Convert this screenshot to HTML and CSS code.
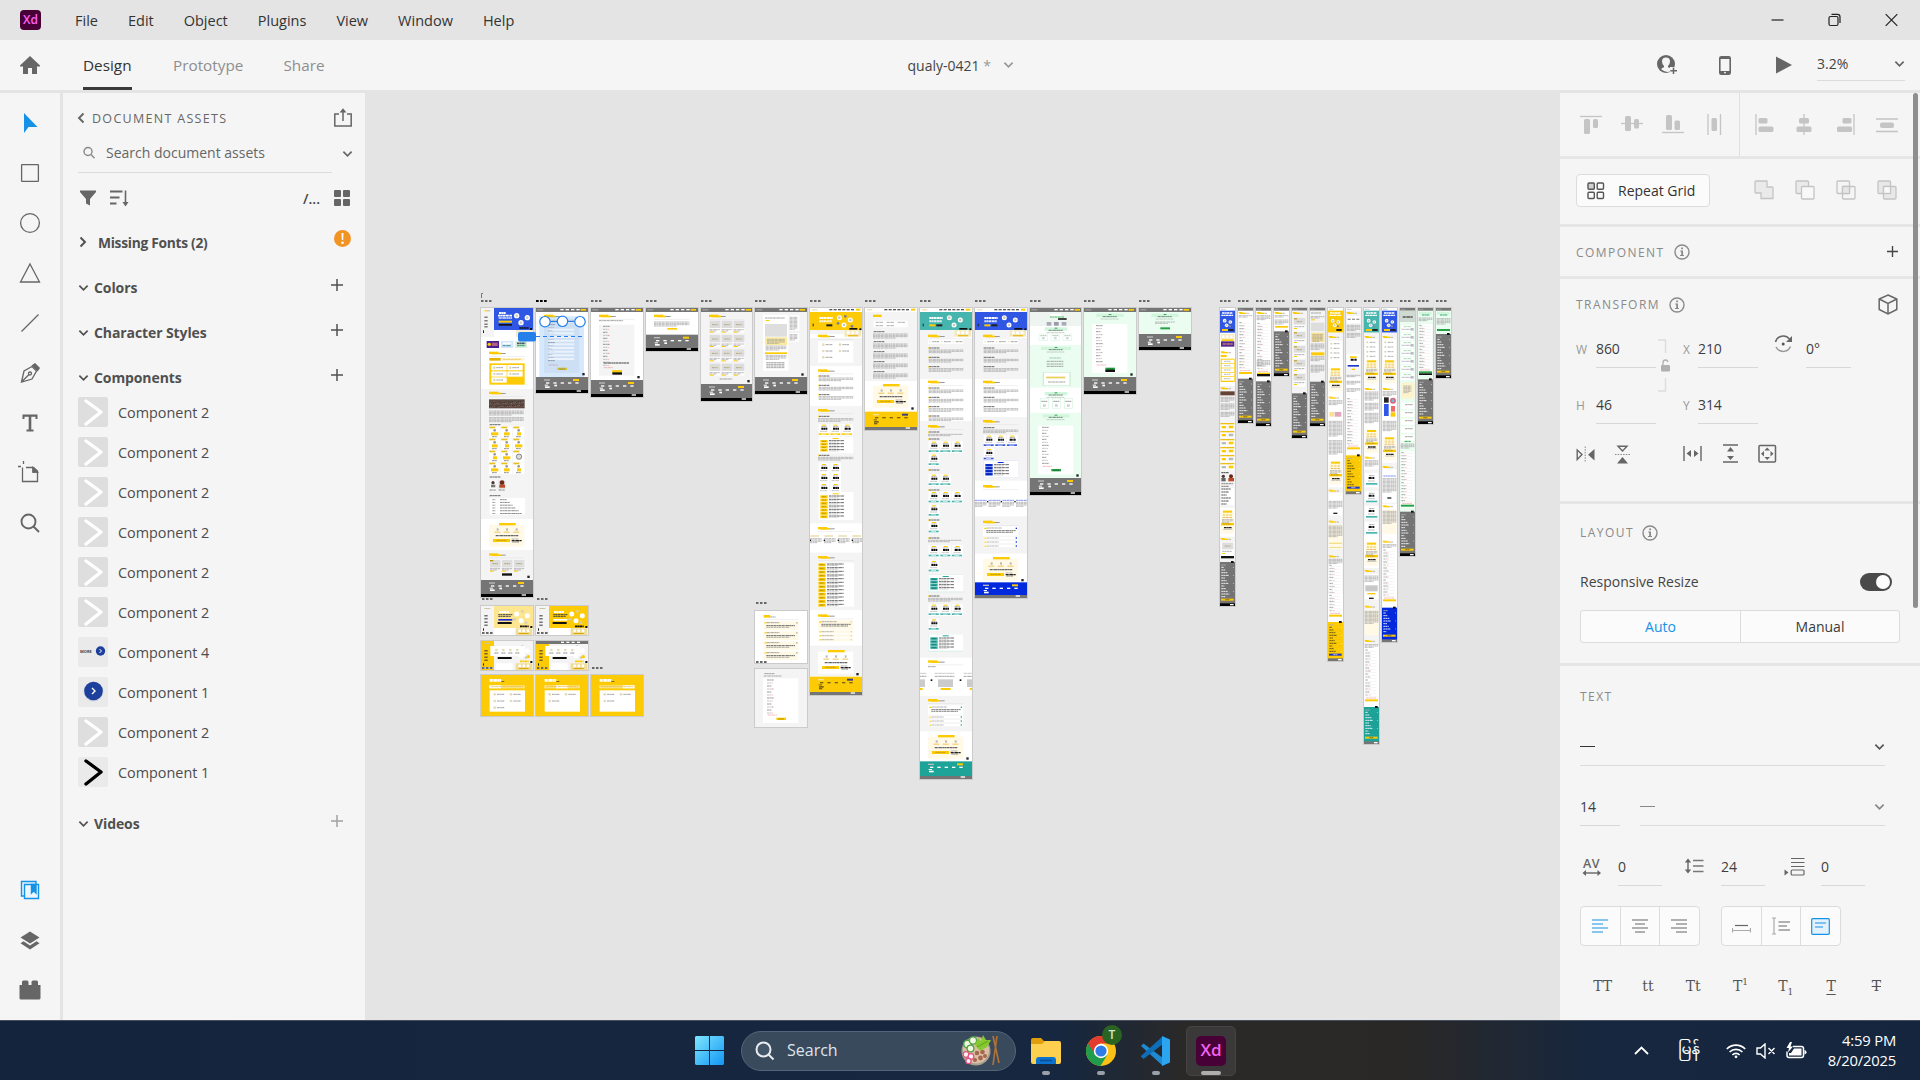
FILE: index.html
```html
<!DOCTYPE html>
<html lang="en">
<head>
<meta charset="utf-8">
<title>qualy-0421 - Adobe XD</title>
<link rel="stylesheet" href="styles.css">
</head>
<body>
<svg width="0" height="0" class="defs">
  <symbol id="down" viewBox="0 0 12 8"><path d="M1.500 1.500 6 6 10.500 1.500" fill="none" stroke="currentColor" stroke-width="1.900"/></symbol>
  <symbol id="right" viewBox="0 0 8 12"><path d="M1.500 1.500 6 6 1.500 10.500" fill="none" stroke="currentColor" stroke-width="1.900"/></symbol>
  <symbol id="plus" viewBox="0 0 12 12"><path d="M6 0V12M0 6H12" stroke="currentColor" stroke-width="1.500"/></symbol>
  <symbol id="info" viewBox="0 0 16 16"><circle cx="8" cy="8" r="7" fill="none" stroke="currentColor" stroke-width="1.400"/><path d="M7.200 3.500H9V5.200H7.200ZM6.200 6.500H9V11H10V12H6V11H7.200V7.500H6.200Z" fill="currentColor"/></symbol>
  <symbol id="tile" viewBox="0 0 30 30"><path d="M8 4 23 15 8 27" fill="none" stroke="currentColor" stroke-width="3.400" stroke-linecap="round" stroke-linejoin="round"/></symbol>
</svg>
<div class="app">
  <header class="titlebar">
    <div class="xd-logo">Xd</div>
    <nav class="menu"><span>File</span><span>Edit</span><span>Object</span><span>Plugins</span><span>View</span><span>Window</span><span>Help</span></nav>
    <div class="win-buttons">
      <svg width="13" height="14"><path d="M0.500 7H12.500" stroke="#222" stroke-width="1.200"/></svg>
      <svg width="13" height="14" fill="none" stroke="#222" stroke-width="1.200"><rect x="1" y="3.500" width="9" height="9" rx="1.500"/><path d="M3.500 1.400H9.500Q12 1.400 12 4V10"/></svg>
      <svg width="13" height="14"><path d="M0.700 1.200 12.300 12.800M12.300 1.200 0.700 12.800" stroke="#222" stroke-width="1.200"/></svg>
    </div>
  </header>
  <div class="modebar">
    <svg class="home" width="20" height="19" viewBox="0 0 20 19"><path d="M10 0 20 9.500V10.500H17V18H12V12H8V18H3V10.500H0V9.500Z" fill="#666"/></svg>
    <nav class="modes"><span class="on">Design</span><span>Prototype</span><span>Share</span></nav>
    <div class="doc-name">qualy-0421 <i>*</i><svg width="11" height="8"><use href="#down"/></svg></div>
    <div class="mode-actions">
      <svg width="21" height="20" viewBox="0 0 21 20"><circle cx="9" cy="9" r="9" fill="#666"/><path d="M4.300 14.500Q4.500 12.800 7 12.200V11Q5 9 5 6.500 5 2.500 9 2.500T13 6.500Q13 9 11 11V12.200L13 13V16.500Q9 18 4.300 14.500Z" fill="#f5f5f5"/><path d="M13 12H21V20H13Z" fill="#f5f5f5"/><path d="M16.500 12.500V19M13.300 15.700H20" stroke="#666" stroke-width="1.500"/></svg>
      <svg width="12" height="19" viewBox="0 0 12 19"><rect x="0.800" y="0.800" width="10.400" height="17.400" rx="1.500" fill="none" stroke="#666" stroke-width="1.600"/><path d="M1 1H11V3H1ZM1 15H11V18H1Z" fill="#666"/><circle cx="6" cy="16.600" r="0.900" fill="#fff"/></svg>
      <svg width="16" height="18"><path d="M0 0.500 16 9 0 17.500Z" fill="#666"/></svg>
      <div class="zoom-level">3.2%<svg width="11" height="8"><use href="#down"/></svg></div>
    </div>
  </div>

  <main class="workspace">
    <aside class="tools">
      <svg width="24" height="24"><path d="M6 2V22L10.500 16H19.500Z" fill="#1592e6"/></svg>
      <svg width="24" height="24" class="ln"><rect x="3.600" y="3.600" width="16.800" height="16.800" rx="0.500"/></svg>
      <svg width="24" height="24" class="ln"><circle cx="12" cy="12" r="9.400"/></svg>
      <svg width="24" height="24" class="ln"><path d="M12 3 21.500 21H2.500Z"/></svg>
      <svg width="24" height="24" class="ln"><path d="M3.500 20.500 20.500 3.500"/></svg>
      <svg width="24" height="24" class="ln"><path d="M3.500 21 6 10 14 5.500 18.500 10 14 18ZM3.500 21 11 13.500"/><circle cx="12" cy="12.500" r="1.500"/><path d="M14.500 4.500 17 2.800 21.200 7 19.500 9.500Z" fill="#666"/></svg>
      <svg width="24" height="24"><path d="M4.500 3.500H19.500V8H17.500V5.800H13.300V18.500H15.500V20.500H8.500V18.500H10.700V5.800H6.500V8H4.500Z" fill="#666"/></svg>
      <svg width="24" height="24" class="ln"><path d="M4.500 6.500V20.500H19.500V10L15.500 6.500H8M15 6.500V11H19.500M5.500 0V3M0 5.500H3"/><path d="M15 6.500V11H19.500Z" fill="#666"/></svg>
      <svg width="24" height="24" class="ln zm"><circle cx="10.500" cy="10.500" r="7"/><path d="M15.500 15.500 21 21"/></svg>
      <div class="spring"></div>
      <svg width="24" height="24" fill="#eaf5fd" stroke="#1592e6" stroke-width="1.400"><path d="M3.500 3.500H18V18H3.500Z"/><path d="M6.500 6.500H20.500V20.500H6.500Z"/><path d="M13.500 6.500H18V15L15.700 12.700 13.500 15Z" fill="#1592e6"/></svg>
      <svg width="24" height="24" fill="#666"><path d="M12 3.500 21.500 9.500 12 15.500 2.500 9.500Z"/><path d="M5.500 13.300 12 17.400 18.500 13.300 21.500 15.200 12 21.500 2.500 15.200Z"/></svg>
      <svg width="24" height="24" fill="#666"><path d="M1.500 7H4V4Q4 2.500 5.500 2.500H9Q10.500 2.500 10.500 4V7H13.500V4Q13.500 2.500 15 2.500H18.500Q20 2.500 20 4V7H22.500V20Q22.500 21.500 21 21.500H3Q1.500 21.500 1.500 20Z"/></svg>
    </aside>

    <aside class="assets">
      <div class="assets-head"><svg width="8" height="12" class="back"><use href="#right"/></svg><span class="caps">DOCUMENT ASSETS</span>
        <svg class="share" width="18" height="19" fill="none" stroke="#666" stroke-width="1.500"><path d="M5 6H0.800V18H17.200V6H13M9 13V2"/><path d="M5.500 4.500 9 0.300 12.500 4.500Z" fill="#666" stroke="none"/></svg></div>
      <div class="search-row"><div class="search"><svg width="12" height="13" fill="none" stroke="#888" stroke-width="1.400"><circle cx="5" cy="5.500" r="4"/><path d="M8 8.500 11.500 12.300"/></svg>Search document assets</div><svg width="11" height="8"><use href="#down"/></svg></div>
      <div class="filters">
        <svg width="16" height="17"><path d="M0 0.500H16V2L10 9V15.500L6 13.500V9L0 2Z" fill="#666"/></svg>
        <svg width="19" height="17" class="sort" fill="none" stroke="#666" stroke-width="2"><path d="M0 1.500H12.500M0 7.500H9.500M0 13.500H6.500"/><path d="M15.500 0.500V14" stroke-width="1.600"/><path d="M12.500 12H18.500L15.500 16.500Z" fill="#666" stroke="none"/></svg>
        <span class="path">/...</span>
        <svg width="16" height="16" fill="#666"><rect width="7" height="7" rx="1"/><rect x="9" width="7" height="7" rx="1"/><rect y="9" width="7" height="7" rx="1"/><rect x="9" y="9" width="7" height="7" rx="1"/></svg>
      </div>
      <div class="group missing"><svg width="8" height="12"><use href="#right"/></svg><b>Missing Fonts (2)</b><svg class="warn" width="17" height="17"><circle cx="8.500" cy="8.500" r="8.500" fill="#f29423"/><path d="M7.500 3H9.500L9.200 10H7.800Z" fill="#fff"/><circle cx="8.500" cy="12.800" r="1.300" fill="#fff"/></svg></div>
      <div class="group"><svg width="11" height="8"><use href="#down"/></svg><b>Colors</b><svg class="add" width="12" height="12"><use href="#plus"/></svg></div>
      <div class="group"><svg width="11" height="8"><use href="#down"/></svg><b>Character Styles</b><svg class="add" width="12" height="12"><use href="#plus"/></svg></div>
      <div class="group"><svg width="11" height="8"><use href="#down"/></svg><b>Components</b><svg class="add" width="12" height="12"><use href="#plus"/></svg></div>
      <ul class="components">
        <li><svg class="thumb"><use href="#tile"/></svg>Component 2</li>
        <li><svg class="thumb"><use href="#tile"/></svg>Component 2</li>
        <li><svg class="thumb"><use href="#tile"/></svg>Component 2</li>
        <li><svg class="thumb"><use href="#tile"/></svg>Component 2</li>
        <li><svg class="thumb"><use href="#tile"/></svg>Component 2</li>
        <li><svg class="thumb"><use href="#tile"/></svg>Component 2</li>
        <li><svg class="thumb pale"><text x="2" y="15.500" class="more">MORE</text><circle cx="22.500" cy="14" r="4.700" fill="#1c409c"/><path d="M21.500 12 23.500 14 21.500 16" fill="none" stroke="#fff"/></svg>Component 4</li>
        <li><svg class="thumb pale"><circle cx="15.500" cy="14.500" r="10" fill="#cfd3de"/><circle cx="15.500" cy="14" r="9.300" fill="#1c409c"/><path d="M14 11 17 14 14 17" fill="none" stroke="#fff" stroke-width="1.400"/></svg>Component 1</li>
        <li><svg class="thumb"><use href="#tile"/></svg>Component 2</li>
        <li><svg class="thumb pale black"><use href="#tile"/></svg>Component 1</li>
      </ul>
      <div class="group videos"><svg width="11" height="8"><use href="#down"/></svg><b>Videos</b><svg class="add dim" width="12" height="12"><use href="#plus"/></svg></div>
    </aside>

    <section class="canvas" id="canvas"></section>

    <aside class="props">
      <div class="sec align">
        <div class="align-half">
          <svg width="22" height="22" class="al"><path d="M0 2.500H22" stroke="#c4c4c4"/><rect x="4" y="5" width="6" height="15" rx="1.500"/><rect x="13" y="5" width="5" height="9" rx="1.500"/></svg>
          <svg width="22" height="22" class="al"><path d="M0 9.500H22" stroke="#c4c4c4"/><rect x="4" y="2" width="6" height="15" rx="1.500"/><rect x="13" y="5" width="5" height="9.500" rx="1.500"/></svg>
          <svg width="22" height="22" class="al"><path d="M0 18.500H22" stroke="#c4c4c4"/><rect x="4" y="1" width="6" height="15" rx="1.500"/><rect x="12.500" y="6.500" width="5.500" height="9.500" rx="1.500"/></svg>
          <svg width="22" height="22" class="al"><path d="M5 0V21M17.500 0V21" stroke="#c4c4c4"/><rect x="8.500" y="4" width="5.500" height="13" rx="1.500"/></svg>
        </div>
        <div class="align-half second">
          <svg width="22" height="22" class="al"><path d="M2 0V21" stroke="#c4c4c4"/><rect x="4.500" y="4" width="9" height="5.500" rx="1.500"/><rect x="4.500" y="12.500" width="15" height="5.500" rx="1.500"/></svg>
          <svg width="22" height="22" class="al"><path d="M11 0V21" stroke="#c4c4c4"/><rect x="6" y="4" width="10" height="5.500" rx="1.500"/><rect x="3.500" y="12.500" width="15" height="5.500" rx="1.500"/></svg>
          <svg width="22" height="22" class="al"><path d="M19 0V21" stroke="#c4c4c4"/><rect x="7.500" y="4" width="9" height="5.500" rx="1.500"/><rect x="2" y="12.500" width="15" height="5.500" rx="1.500"/></svg>
          <svg width="22" height="22" class="al"><path d="M0 5H22M0 17.500H22" stroke="#c4c4c4"/><rect x="4" y="8.500" width="14" height="5.500" rx="2"/></svg>
        </div>
      </div>
      <div class="sec repeat">
        <div class="btn"><svg width="18" height="18" fill="none" stroke="#555" stroke-width="1.400"><rect x="1" y="1" width="6.300" height="6.300" rx="1" fill="#d0d0d0"/><rect x="10.200" y="1" width="6.300" height="6.300" rx="1"/><rect x="1" y="10.200" width="6.300" height="6.300" rx="1"/><rect x="10.200" y="10.200" width="6.300" height="6.300" rx="1"/></svg>Repeat Grid</div>
        <div class="bools">
          <svg width="20" height="20" class="bl"><path d="M1 2Q1 1 2 1H13V7H18Q19 7 19 8V18.500H7V13H2Q1 13 1 12Z" fill="#eaeaea"/></svg>
          <svg width="20" height="20" class="bl"><rect x="1" y="1" width="12.500" height="12.500" rx="1" fill="#eaeaea"/><rect x="6.500" y="6.500" width="12.500" height="12.500" rx="1" fill="#f8f8f8"/></svg>
          <svg width="20" height="20" class="bl"><rect x="1" y="1" width="12.500" height="12.500" rx="1"/><rect x="6.500" y="6.500" width="12.500" height="12.500" rx="1"/><rect x="6.500" y="6.500" width="7" height="7" fill="#e5e5e5"/></svg>
          <svg width="20" height="20" class="bl"><rect x="1" y="1" width="12.500" height="12.500" rx="1" fill="#e8e8e8"/><rect x="6.500" y="6.500" width="12.500" height="12.500" rx="1" fill="#e8e8e8"/><rect x="6.500" y="6.500" width="7" height="7" fill="#f8f8f8"/></svg>
        </div>
      </div>
      <div class="sec comp"><span class="caps">COMPONENT</span><svg class="info" width="16" height="16"><use href="#info"/></svg><svg class="end plus" width="11" height="11"><use href="#plus"/></svg></div>
      <div class="sec transform">
        <div class="row"><span class="caps">TRANSFORM</span><svg class="info" width="16" height="16"><use href="#info"/></svg>
          <svg class="end" width="20" height="21" fill="none" stroke="#666" stroke-width="1.500"><path d="M10 1 18.800 5V15.500L10 20 1.200 15.500V5ZM1.200 5 10 9.500 18.800 5M10 9.500V20"/></svg></div>
        <div class="fields">
          <label>W</label><span class="val">860</span>
          <svg class="link" width="27" height="60"><path d="M2 5H9.500V18M9.500 43V56H2" fill="none" stroke="#ddd" stroke-width="1.400"/><rect x="5" y="30" width="9" height="6.500" rx="1" fill="#b0b0b0"/><path d="M7 30V27.500Q7 25 9.500 25 11.500 25 12 27" fill="none" stroke="#b0b0b0" stroke-width="1.300"/></svg>
          <label>X</label><span class="val">210</span><i></i>
          <svg class="rot" width="19" height="20" fill="none" stroke="#666" stroke-width="1.500"><path d="M1.500 8A8 8 0 0 1 15.500 5" /><path d="M2 13A8 8 0 0 0 16.500 12.500" stroke="#999"/><path d="M18 2V8H12Z" fill="#666" stroke="none"/><circle cx="9.200" cy="10" r="1.500" fill="#555" stroke="none"/></svg>
          <span class="val">0°</span>
          <label>H</label><span class="val">46</span><label class="y">Y</label><span class="val">314</span>
        </div>
        <div class="flips" >
          <svg width="19" height="20"><path d="M1.200 6 6 10.500 1.200 15.500Z" fill="none" stroke="#666" stroke-width="1.400"/><path d="M18.500 5V16.500L12 10.700Z" fill="#666"/><path d="M9.200 2.500V18.500" stroke="#888" stroke-dasharray="1.500 1.200"/></svg>
          <svg width="17" height="20"><path d="M4 2.200H13L8.500 7Z" fill="none" stroke="#666" stroke-width="1.400"/><path d="M3 19.500H14L8.500 13Z" fill="#666"/><path d="M1 10.500H16" stroke="#888" stroke-dasharray="1.500 1.200"/></svg>
          <svg class="gap" width="19" height="18"><path d="M1 1V16M18 1V16" stroke="#666" stroke-width="1.400"/><path d="M3.500 8.500 8 5V12ZM15.500 8.500 11 5V12Z" fill="#666"/></svg>
          <svg width="16" height="20"><path d="M0 1H15M0 18H15" stroke="#666" stroke-width="1.400"/><path d="M7.500 3 11 7.500H4ZM7.500 16 11 12H4Z" fill="#666"/></svg>
          <svg width="19" height="20"><rect x="1" y="1.500" width="16.500" height="16.500" rx="1" fill="none" stroke="#666" stroke-width="1.500"/><path d="M9.200 3.500 12 6.500H6.400ZM9.200 16 12 13H6.400ZM3 9.800 6 7V12.500ZM15.500 9.800 12.500 7V12.500Z" fill="#666"/></svg>
        </div>
      </div>
      <div class="sec layout">
        <div class="row"><span class="caps">LAYOUT</span><svg class="info" width="16" height="16"><use href="#info"/></svg></div>
        <div class="row resp"><span>Responsive Resize</span><div class="toggle"></div></div>
        <div class="seg"><span class="blue">Auto</span><span>Manual</span></div>
      </div>
      <div class="sec text">
        <div class="caps tx">TEXT</div>
        <div class="select"><em></em><svg width="11" height="8"><use href="#down"/></svg></div>
        <div class="pair"><span class="val">14</span><div class="select light"><em></em><svg width="11" height="8"><use href="#down"/></svg></div></div>
        <div class="spacing">
          <div class="kern"><span>AV</span><svg width="20" height="6"><path d="M2 3H18" stroke="#666" stroke-width="1.400"/><path d="M0.500 3 4 0V6ZM19 3 15.500 0V6Z" fill="#666"/></svg></div>
          <span class="val">0</span>
          <svg class="lead" width="20" height="18"><path d="M9 2.500H19.500M9 8H19.500M9 13.500H19.500" stroke="#777" stroke-width="1.300"/><path d="M4 2V14" stroke="#666" stroke-width="1.400"/><path d="M4 0.500 7.200 4.500H0.800ZM4 15.500 7.200 11.500H0.800Z" fill="#666"/></svg>
          <span class="val">24</span>
          <svg class="parag" width="21" height="20" fill="none" stroke="#666" stroke-width="1.200"><path d="M7 1.500H20.500M7 5.500H20.500M7 9.500H20.500"/><rect x="7.200" y="13" width="12.800" height="5" rx="1"/><path d="M0.500 12.500 4.500 15.500 0.500 18.500Z" fill="#666" stroke="none"/></svg>
          <span class="val">0</span>
        </div>
        <div class="btn-groups">
          <div class="bg"><span class="blue"><svg width="17" height="14"><path d="M0 1H16M0 5H11M0 9H16M0 13H11"/></svg></span><span><svg width="17" height="14"><path d="M0 1H16M3 5H13M0 9H16M3 13H13"/></svg></span><span><svg width="17" height="14"><path d="M0 1H16M5 5H16M0 9H16M5 13H16"/></svg></span></div>
          <div class="bg"><span><svg width="19" height="14"><path d="M3 6.500H16"/><path d="M0.500 9V13.500M18.500 9V13.500M0.500 11.500H18.500" stroke="#aaa"/></svg></span><span><svg width="18" height="18"><path d="M6.500 5H18M6.500 9H15M6.500 13H18"/><path d="M0 1H4M0 17H4M2 1V17" stroke="#aaa"/></svg></span><span class="blue"><svg width="19" height="17"><rect x="0.700" y="0.700" width="17.600" height="15.600" rx="1" fill="#e3f1fc"/><path d="M4 5H15M4 9H12"/></svg></span></div>
        </div>
        <div class="cases"><span>TT</span><span>tt</span><span>Tt</span><span>T<sup>1</sup></span><span>T<sub>1</sub></span><span class="ul">T</span><span class="st">T</span></div>
      </div>
      <div class="scrollbar"></div>
    </aside>
  </main>

  <footer class="taskbar">
    <div class="dock">
      <svg class="start" width="29" height="29"><defs><linearGradient id="w" x1="0" y1="0" x2="1" y2="1" ><stop offset="0" stop-color="#7ee6fd"/><stop offset="1" stop-color="#1296f5"/></linearGradient></defs><path d="M1 0H14V14H0V1ZM15 0H28L29 1V14H15ZM0 15H14V29H1L0 28ZM15 15H29V28L28 29H15Z" fill="url(#w)"/></svg>
      <div class="task-search"><svg width="20" height="20" fill="#44566a" stroke="#e8ecf0" stroke-width="2"><circle cx="8.500" cy="8.500" r="7"/><path d="M13.500 13.500 18.500 18.500"/></svg><span>Search</span>
        <svg class="food" width="42" height="34"><circle cx="16" cy="17" r="14.500" fill="#a8a08c"/><circle cx="16" cy="16.500" r="13" fill="#d9bfa6"/><g fill="#a5684e"><circle cx="17" cy="19" r="2.300"/><circle cx="22.500" cy="18" r="2.300"/><circle cx="20.500" cy="24" r="2.400"/><circle cx="25" cy="22" r="2"/><circle cx="15" cy="26" r="2"/></g><g fill="#f1f8de" stroke="#4fa345" stroke-width="1.400"><circle cx="7.500" cy="10" r="3.800"/><circle cx="13" cy="6.500" r="3.600"/><circle cx="10.500" cy="14.500" r="3.400"/></g><path d="M15 11 18 4 21 7 23 1 26 6 31 6 27 13 20 17Z" fill="#86c82f"/><path d="M17 13 28 7" stroke="#5f9f22" stroke-width="1"/><g fill="#fdf1f5" stroke="#e2527f" stroke-width="1.200"><circle cx="6" cy="20.500" r="2.800"/><circle cx="11" cy="22.500" r="2.800"/><circle cx="8.500" cy="27" r="2.600"/></g><path d="M33 2 39 29M37 2 33 31" stroke="#ae7138" stroke-width="1.700"/></svg></div>
      <div class="task"><svg width="30" height="30"><path d="M0 4Q0 2 2 2H10L13 5H28V14H0Z" fill="#e09d0c"/><path d="M0 8H11L14 5H28Q30 5 30 7V26Q30 28 28 28H2Q0 28 0 26Z" fill="#fdd04f"/><path d="M5 28V24Q5 21 8 21H22Q25 21 25 24V28Z" fill="#0c74cf"/><path d="M9 24.500H21" stroke="#0b4f97" stroke-width="1.600"/></svg><i></i></div>
      <div class="task"><svg class="chrome" width="30" height="30" viewBox="0 0 30 30"><circle cx="15" cy="15" r="15" fill="#fbc116"/><path d="M15 15V8L2 7.500A15 15 0 0 0 14.500 30L21.500 18.500Z" fill="#1f9c4c"/><path d="M2 7.500A15 15 0 0 1 28 7.500H14L9 18.500Z" fill="#e33b2e"/><circle cx="15" cy="15" r="7.200" fill="#fff"/><circle cx="15" cy="15" r="5.600" fill="#2f7be8"/></svg><b>T</b><i></i></div>
      <div class="task"><svg width="30" height="30"><path d="M0 10 2.500 7.500 22 22V30Z" fill="#1f8ad2"/><path d="M0 20 22 0V8L2.500 23 0 20.500Z" fill="#0e6fb8"/><path d="M21 0 29 3.500V26.500L21 30Z" fill="#2ca5f1"/></svg><i></i></div>
      <div class="task active"><div class="xd-big">Xd</div><i></i></div>
    </div>
    <div class="tray">
      <svg width="15" height="9"><path d="M1 8 7.500 1.500 14 8" fill="none" stroke="#fff" stroke-width="1.800"/></svg>
      <span class="lang">မြန်</span>
      <svg width="20" height="16" fill="none" stroke="#fff" stroke-width="1.700"><path d="M0.800 6A13 13 0 0 1 19.200 6M3.600 9A9 9 0 0 1 16.400 9M6.400 12A5 5 0 0 1 13.600 12"/><circle cx="10" cy="13.800" r="1.400" fill="#fff" stroke="none"/></svg>
      <svg width="20" height="16" fill="none" stroke="#fff" stroke-width="1.400"><path d="M1 5H4.500L9 1V15L4.500 11H1ZM12.500 5 18.500 11M18.500 5 12.500 11"/></svg>
      <svg width="21" height="17"><path d="M7 4.500H15.500Q17.500 4.500 17.500 6.500V13.500Q17.500 15.500 15.500 15.500H3Q1 15.500 1 13.500V9.500" fill="none" stroke="#fff" stroke-width="1.500"/><path d="M8 6.500H15.500V13.500H3V11H5Z" fill="#fff"/><path d="M18.500 8V12.500Q20.500 12 20.500 10.200T18.500 8Z" fill="#fff"/><path d="M4 0 0.500 6H3L2 10.500 7 4.500H4.500L6 0Z" fill="#fff"/></svg>
      <div class="clock"><span>4:59 PM</span><span>8/20/2025</span></div>
    </div>
  </footer>
</div>
<script src="boards.js"></script>
</body>
</html>
```
FILE: styles.css
```css
* { box-sizing: border-box; }
body { margin: 0; background: #e4e4e4; font-family: "Open Sans", "Noto Sans", sans-serif; font-size: 14px; color: #444; overflow: hidden; }
svg { display: block; flex: none; }
.defs { position: absolute; }
.app { width: 1920px; height: 1080px; display: flex; flex-direction: column; }

.titlebar { height: 40px; background: #e4e4e4; display: flex; align-items: center; padding-left: 20px; }
.xd-logo { width: 21px; height: 20px; border-radius: 4px; background: #470137; color: #ff61f6; font-weight: 600; font-size: 12px; line-height: 19px; text-align: center; }
.menu { display: flex; gap: 30px; margin-left: 34px; color: #333; font-size: 14.500px; }
.win-buttons { margin-left: auto; display: flex; gap: 44px; padding-right: 22px; }

.modebar { height: 53px; background: #f5f5f5; border-bottom: 3px solid #e4e4e4; display: flex; align-items: center; padding-left: 20px; }
.modes { display: flex; gap: 40px; margin-left: 43px; align-self: stretch; font-size: 15.300px; color: #8e8e8e; }
.modes span { line-height: 50px; height: 50px; }
.modes .on { width: 49px; margin-right: 1px; color: #333; border-bottom: 3px solid #3a3a3a; }
.doc-name { position: static; margin-left: 583px; width: 106px; display: flex; align-items: center; white-space: pre; color: #444; }
.doc-name i { color: #999; font-style: normal; }
.doc-name svg { margin-left: auto; color: #999; }
.mode-actions { margin-left: auto; display: flex; align-items: center; }
.mode-actions > svg:nth-child(1) { margin-right: 41px; }
.mode-actions > svg:nth-child(2) { margin-right: 45px; }
.mode-actions > svg:nth-child(3) { margin-right: 25px; }
.zoom-level { width: 88px; height: 32px; margin-right: 15px; padding-bottom: 2px; border-bottom: 1px solid #dcdcdc; display: flex; align-items: center; justify-content: space-between; }
.zoom-level svg { color: #666; }

.workspace { height: 927px; display: flex; }
.tools { width: 60px; background: #f5f5f5; padding: 18px 0 18px; display: flex; flex-direction: column; align-items: center; gap: 26px; }
.ln { fill: none; stroke: #666; stroke-width: 1.300; }
.zm { stroke-width: 1.900; }
.spring { flex: 1; }

.assets { width: 302px; margin-left: 3px; background: #f5f5f5; padding-left: 15px; }
.caps { font-size: 12.500px; letter-spacing: 1.300px; color: #666; }
.assets-head { height: 50px; display: flex; align-items: center; padding-right: 13px; }
.assets-head .caps { margin-left: 7px; }
.back { margin-left: -1px; transform: rotate(180deg); color: #666; }
.share { margin-left: auto; margin-top: -2px; }
.search-row { height: 30px; display: flex; align-items: center; gap: 10px; color: #666; }
.search-row > svg { margin-bottom: 9px; }
.search { width: 254px; height: 30px; border-bottom: 1px solid #dcdcdc; display: flex; align-items: center; padding: 0 0 10px 5px; gap: 11px; }
.filters { height: 50px; display: flex; align-items: center; padding: 0 15px 0 2px; }
.sort { margin-left: 14px; }
.path { margin-left: auto; margin-right: 14px; font-weight: 600; }
.group { height: 45px; display: flex; align-items: center; color: #505050; }
.group b { margin-left: 5px; font-weight: 700; font-size: 14px; letter-spacing: -0.100px; }
.group .add { margin: -6px 22px 0 auto; }
.group .dim { opacity: .5; }
.missing { height: 38px; padding-left: 1px; margin-bottom: 4px; }
.missing b { margin-left: 11px; font-size: 13.800px; letter-spacing: -0.300px; }
.group .warn { margin: -8px 14px 0 auto; }
.components { list-style: none; margin: -8px 0 0; padding: 0; color: #4d4d4d; font-size: 14.400px; }
.components li { height: 40px; display: flex; align-items: center; gap: 10px; }
.thumb { width: 30px; height: 30px; background: #dedede; border-radius: 2px; color: #fff; }
.pale { background: #eaeaea; }
.black { color: #000; }
.more { font-size: 4px; font-weight: 700; fill: #444; }
.videos { margin-top: 9px; }

.canvas { width: 1195px; position: relative; overflow: hidden; }
.board { position: absolute; box-shadow: 0 0 0 1px #cbcbcb; background: #fff; }
.dots { position: absolute; width: 11px; height: 2px; background: repeating-linear-gradient(90deg, #686868 0 2px, #a5a5a5 2px 3px, transparent 3px 4px); }
.dots.sel { background: repeating-linear-gradient(90deg, #000 0 2px, #444 2px 3px, transparent 3px 4px); }
.over { position: absolute; }

.props { width: 360px; background: #f5f5f5; position: relative; }
.sec { border-bottom: 3px solid #e6e6e6; }
.align { height: 66px; display: flex; }
.align-half { display: flex; align-items: center; gap: 19px; padding-left: 20px; width: 179px; }
.second { border-left: 1px solid #e0e0e0; width: auto; padding-left: 14px; gap: 0; }
.second svg:nth-child(1) { margin-right: 17px; }
.second svg:nth-child(2) { margin-right: 20px; }
.second svg:nth-child(3) { margin-right: 19px; }
.al { fill: #c4c4c4; stroke-width: 1.300; }
.repeat { height: 68px; display: flex; align-items: center; padding: 0 0 2px 16px; }
.btn { width: 134px; height: 33px; border: 1px solid #dcdcdc; border-radius: 4px; background: #fbfbfb; display: flex; align-items: center; padding-left: 10px; gap: 13px; color: #333; }
.bools { display: flex; gap: 21px; margin: -2px 0 0 44px; }
.bl { fill: none; stroke: #c4c4c4; stroke-width: 1.300; }
.comp { height: 52px; display: flex; align-items: center; padding: 1px 22px 0 16px; }
.props .caps { color: #8a8a8a; font-size: 12px; letter-spacing: 1.450px; }
.info { margin-left: 9px; color: #8a8a8a; }
.end { margin-left: auto; }
.comp .end { margin-top: -2px; }
.row { display: flex; align-items: center; }
.transform { height: 225px; padding: 0 22px 0 16px; }
.transform .row { height: 51px; }
.fields { display: grid; grid-template-columns: 20px 60px 27px 15px 60px 16px 32px 45px; grid-template-rows: 38px 38px; row-gap: 18px; align-items: center; }
.fields label { font-size: 12px; color: #999; }
.fields .y { grid-column: 4; }
.link { grid-column: 3; grid-row: 1 / 3; align-self: start; margin-top: 5px; }
.rot { margin-top: -11px; }
.val { height: 38px; border-bottom: 1px solid #d8d8d8; display: flex; align-items: center; padding-bottom: 1px; color: #3e3e3e; letter-spacing: -0.100px; }
.flips { display: flex; align-items: center; margin-top: 19px; height: 22px; }
.flips svg { margin-right: 19px; }
.flips .gap { margin-left: 33px; margin-right: 21px; }
.layout { height: 162px; padding: 0 20px; }
.layout .row { height: 57px; }
.layout .info { margin-left: 8px; }
.layout .resp { height: 41px; justify-content: space-between; padding-right: 8px; }
.toggle { width: 32px; height: 18px; border-radius: 9px; background: #4a4a4a; padding: 2px 2px 2px 16px; }
.toggle::after { content: ""; display: block; width: 14px; height: 14px; border-radius: 7px; background: #fff; }
.seg { display: flex; height: 33px; margin-top: 8px; border: 1px solid #dcdcdc; border-radius: 3px; background: #fbfbfb; color: #3a3a3a; }
.seg span { width: 159px; display: flex; align-items: center; justify-content: center; }
.seg span + span { border-left: 1px solid #dcdcdc; }
.seg .blue { color: #1592e6; }
.text { border: 0; padding: 22px 35px 0 20px; }
.tx { line-height: 18px; }
.select { height: 38px; margin-top: 22px; border-bottom: 1px solid #dcdcdc; display: flex; align-items: center; justify-content: space-between; color: #555; }
.select em { width: 15px; height: 1px; background: #333; }
.pair { display: grid; grid-template-columns: 40px 245px; gap: 20px; margin-top: 22px; }
.select.light { margin: 0; color: #888; }
.light em { background: #888; }
.spacing { display: grid; grid-template-columns: 38px 44px 20px 39px 44px 17px 39px 44px; margin-top: 22px; align-items: center; }
.kern { padding-left: 2px; font-size: 12.500px; line-height: 12px; font-weight: 600; color: #666; }
.kern span { display: block; padding-left: 1px; letter-spacing: 0.500px; }
.lead { grid-column: 4; margin-left: 2px; }
.parag { grid-column: 7; margin-left: 2px; }
.btn-groups { display: flex; gap: 21px; margin-top: 20px; }
.bg { display: flex; width: 120px; height: 40px; border: 1px solid #dcdcdc; border-radius: 4px; background: #fbfbfb; }
.bg span { flex: 1; display: flex; align-items: center; justify-content: center; }
.bg span + span { border-left: 1px solid #dcdcdc; }
.bg svg { fill: none; stroke: #666; stroke-width: 1.200; }
.bg .blue svg { stroke: #1592e6; }
.cases { display: flex; margin: 25px -14px 0 0; font: 400 14px/30px "DejaVu Serif", "Liberation Serif", serif; color: #555; }
.cases span { width: 45.500px; text-align: center; }
.cases span:nth-child(4) { margin-left: 2px; }
.cases sup, .cases sub { font-size: 9px; line-height: 0; }
.ul { text-decoration: underline; text-underline-offset: 3px; }
.st { text-decoration: line-through; }
.scrollbar { position: absolute; right: 2px; top: 0; width: 5px; height: 515px; border-radius: 3px; background: #8e8e8e; }

.taskbar { height: 60px; border-top: 1px solid #46505f; background: linear-gradient(90deg, #14243d 0, #16273f 1060px, #2b2927 1190px, #2a2826 1400px, #16273f 1600px, #15253e); display: flex; align-items: center; justify-content: space-between; padding: 0 24px 0 695px; color: #fff; }
.dock { display: flex; align-items: center; }
.task-search { width: 275px; height: 40px; margin: 0 5px 0 17px; border: 1px solid #53657a; border-radius: 20px; background: #394a5d; display: flex; align-items: center; padding: 0 13px; font-size: 16px; color: #dfe4ea; }
.task-search span { margin-left: 12px; margin-top: -1px; }
.food { margin-left: auto; }
.task { width: 50px; height: 50px; margin-right: 5px; border-radius: 5px; position: relative; display: flex; align-items: center; justify-content: center; }
.task i { position: absolute; bottom: 1px; left: 21px; width: 8px; height: 4px; border-radius: 2px; background: #9aa0a8; }
.task b { position: absolute; left: 26px; top: -1px; width: 20px; height: 20px; border-radius: 10px; background: #2a6420; color: #d7e6d3; font-size: 12px; font-weight: 600; line-height: 20px; text-align: center; }
.active { background: #3a3838; border: 1px solid #454343; }
.active i { left: 14px; bottom: 0; width: 20px; background: #b0adad; }
.xd-big { width: 30px; height: 30px; border-radius: 5px; background: #470137; color: #f560ee; font-size: 17px; font-weight: 600; line-height: 28px; text-align: center; }
.tray { display: flex; align-items: center; }
.tray > svg { margin-right: 10px; }
.tray > svg:first-child { margin-right: 29px; }
.lang { width: 22px; margin-right: 26px; font-size: 15px; font-family: "Noto Sans Myanmar", "Myanmar Text", "Noto Sans", sans-serif; white-space: nowrap; }
.clock { width: 79px; margin-top: -2px; display: flex; flex-direction: column; align-items: flex-end; font-size: 14.800px; line-height: 20px; letter-spacing: -0.200px; }
```
FILE: boards.js
```js
// Artboard thumbnails. Drawing units are thirds of a pixel.
const Y = '#fdcb05', G = '#f4f4f4', B = '#2f57e4', TL = '#45b5ad', CR = '#fff9e6', MINT = '#ebfdf1';
let out;
const r = (x, y, w, h, c) => { out.push(`<rect x="${x}" y="${y}" width="${w}" height="${h}" fill="${c}"/>`); };
const c = (x, y, rad, f, s) => { out.push(`<circle cx="${x}" cy="${y}" r="${rad}" fill="${f}"${s ? ` stroke="${s}" stroke-width="2"` : ''}/>`); };
const ln = (x, y, w, col = '#8c8c8c', h = 2) => { out.push(`<path d="M${x} ${y}h${w}" stroke="${col}" stroke-width="${h}" stroke-dasharray="7 .8 4 1 9 1.200"/>`); };
const para = (x, y, w, n) => { for (let i = 0; i < n; i++) ln(x, y + i * 4, i === n - 1 ? w * .65 : w, '#999', 2); };
const bits = (x, y, n, gap, w, col) => { for (let i = 0; i < n; i++) r(x + i * gap, y, w, 4, col); };

const grayNav = () => { r(0, 0, 156, 12, '#757575'); r(4, 4, 18, 3, '#aaa'); bits(73, 3, 4, 16, 10, '#fff'); r(134, 3, 16, 5, Y); };
const whiteNav = () => { r(0, 0, 156, 12, '#fff'); r(6, 4, 16, 3, '#e6d9a0'); bits(58, 3, 6, 13, 9, '#555'); r(138, 2, 13, 6, Y); };
const head = (y) => { r(24, y, 28, 7, Y); r(32, y + 3, 28, 5, Y); r(60, y + 4, 14, 3, '#999'); r(24, y + 13, 106, 1.5, '#e2e2e2'); };
const section = (y) => { r(24, y, 2, 5, Y); ln(27, y + 2, 32, '#666', 3); };
const foot = (y, h, col = '#757575', bar = '#000') => {
  r(0, y, 156, h, col); r(0, y + h - 9, 156, 9, bar); r(122, y + h - 8, 13, 4, '#fff');
  const yellow = col === Y, ink = yellow ? '#7a6510' : '#fff';
  r(24, y + 7, 18, 4, yellow ? '#f3e19a' : '#bbb'); r(111, y + 6, 18, 6, yellow ? '#3b3f7e' : Y); bits(30, y + 16, 5, 22, 10, ink);
  r(26, y + 23, 10, 3, ink); r(27, y + 28, 14, 5, ink); if (yellow) r(27, y + 34, 10, 4, ink); if (bar === '#000') r(55, y + 23, 8, 5, '#fff');
};
const contact = (y, bg = CR) => {
  r(24, y + 6, 106, 66, bg); r(54, y + 1, 50, 7, Y);
  [50, 78, 107].forEach(x => { r(x - 3, y + 17, 6, 7, '#bbb'); r(x - 10, y + 27, 18, 3, '#eec45a'); });
  ln(44, y + 39, 68, '#666', 4); r(36, y + 49, 51, 9, Y); ln(46, y + 53, 30, '#a58a20', 2); ln(92, y + 49, 20, '#888'); ln(92, y + 54, 30, '#222', 4); ln(94, y + 58, 20, '#444');
};
const hero = (col) => {
  r(0, 12, 156, 54, col); ln(28, 30, 40, '#fff', 6); ln(28, 40, 38, '#ffffffd0', 6); r(28, 49, 18, 6, Y); r(49, 49, 18, 6, '#222');
  [[88, 29], [121, 36], [102, 51], [106, 25], [126, 55], [84, 46]].forEach((p, i) => c(p[0], p[1], i < 3 ? 7.5 : 4, i < 3 ? '#fff' : (col === Y ? '#7b7a9a' : col)));
  [[88, 29], [121, 36], [102, 51]].forEach(p => c(p[0], p[1], 4, '#c8c8c0'));
  r(8, 47, 3, 8, '#222'); r(118, 60, 24, 5, '#111'); r(148, 61, 6, 6, '#111'); r(103, 67, 50, 19, '#f4e7ba'); [115, 128, 141].forEach(x => c(x, 74, 5, '#fff')); r(114, 81, 30, 4, '#e8bc2a');
};
const square = (y) => r(139, y, 7, 7, '#222');
const prices = (y, n, col) => { for (let i = 0; i < n; i++) { const x = 26 + i * 35; r(x, y, 32, 36, '#fff'); r(x + 10, y + 2, 12, 3, Y); ln(x + 8, y + 8, 16, '#777', 2); ln(x + 8, y + 14, 18, '#111', 6); ln(x + 4, y + 22, 22, '#aaa'); if (col) { r(x, y + 28, 30, 5, col); r(x + 7, y + 29, 15, 3, '#fffa'); } } };
const table = (y, n, col, p = 10) => { r(26, y, 104, n * p + 13, '#fff'); r(68, y + 3, 18, 3, col); for (let i = 0; i < n; i++) { r(31, y + 9 + i * p, 22, p - 1.5, col); ln(36, y + 13 + i * p, 12, '#0006'); ln(57, y + 11 + i * p, 45, '#666', 3); ln(57, y + 15 + i * p, 28, '#aaa', 1.5); } };
const faq = (y, n, bg, col) => { r(24, y, 106, 28, bg); r(28, y + 4, 7, 4, Y); ln(36, y + 5, 44, '#888'); ln(34, y + 13, 88, '#777', 3); ln(34, y + 18, 80, '#888', 3); r(122, y + 4, 4, 4, col); for (let i = 0; i < n; i++) { r(26, y + 31 + i * 12, 104, 8, bg); r(28, y + 34 + i * 12, 7, 3, Y); ln(36, y + 35 + i * 12, 36, '#999'); r(122, y + 33 + i * 12, 4, 4, col); } };
const form = (y, h, btn, bg) => { r(24, y, 106, h, bg); let i = 0; for (let q = y + 5; q < y + h - 28; q += 9, i++) { ln(36, q, i % 3 ? 14 : 20, i % 2 ? '#aaa' : '#666'); if (i % 2) r(50, q - 1, 4, 2, '#f3a1a1'); } ln(38, y + h - 24, 28, '#ec9a9a', 2); r(64, y + h - 16, 29, 7, btn); ln(70, y + h - 12, 17, '#0007'); };

const D1 = () => {
  r(0, 0, 39, 87, G); r(10, 7, 8, 3, Y); r(18, 7, 10, 3, '#bbb'); [26, 37, 47, 55].forEach(q => { r(10, q, 10, 3, '#444'); }); r(6, 67, 3, 8, '#222');
  r(39, 0, 117, 66, B); ln(54, 15, 20, '#fff', 6); ln(51, 23, 42, '#fff', 5); ln(53, 30, 40, '#dfe6ff', 5); r(53, 38, 40, 6, Y); r(53, 48, 40, 5, '#111');
  [[107, 23], [139, 29], [120, 44]].forEach(p => { c(p[0], p[1], 8, '#fff'); c(p[0], p[1], 4, '#ccc'); }); ln(115, 60, 28, '#111', 5); r(147, 60, 6, 6, '#111'); r(105, 66, 50, 22, '#f3ecd2');
  r(17, 99, 37, 21, '#48208f'); c(25, 109, 5, Y); r(32, 104, 18, 10, '#b0617f'); r(60, 99, 37, 21, '#d5e7fa'); ln(66, 106, 25, '#fff', 5); ln(65, 113, 25, '#59a', 4); r(103, 99, 35, 21, '#d8efdc'); ln(108, 106, 25, '#456', 5); ln(108, 113, 25, '#4a7', 4);
  head(131); r(25, 150, 34, 8, '#e3b300'); r(60, 150, 70, 8, '#fff3c9'); ln(66, 154, 54, '#e0ba38'); r(25, 166, 106, 64, Y);
  [[31, 171], [79, 171], [31, 190], [79, 190], [31, 208]].forEach(p => { r(p[0], p[1], 46, 16, '#fff'); c(p[0] + 9, p[1] + 8, 3.5, '#dcd2ae'); ln(p[0] + 15, p[1] + 8, 20, '#777'); });
  r(0, 243, 156, 390, G); head(251); r(24, 274, 107, 27, '#584a42'); for (let i = 0; i < 102; i++) r(25 + i % 34 * 3.1, 279 + (i * 7 + (i / 34 | 0) * 5) % 19, 2, 2, ['#a2573e', '#b99c8a', '#20242a', '#7b3526'][i % 4]);
  para(24, 309, 105, 4); para(24, 329, 105, 4); section(348);
  for (let j = 0; j < 4; j++) for (let i = 0; i < 3; i++) { const x = 24 + i * 36, q = 356 + j * 36; r(x, q, 34, 34, '#fff'); r(x + 1, q, 18, 5, '#ecbf18'); if (i === 2 && j === 2) { c(x + 18, q + 18, 8, '#ddd', '#555'); } else { c(x + 17, q + 11, 4, '#999'); r(x + 6 + (i + j) % 3 * 3, q + 17, 22 - (i + j) % 3 * 5, 9, Y); ln(x + 9, q + 30, 15, '#555'); } }
  section(505); r(28, 518, 17, 24, '#fff'); c(36, 524, 5, '#4c3934'); r(30, 530, 13, 8, '#777'); r(53, 518, 20, 24, '#ddd'); c(63, 524, 7, '#6a2a18'); r(55, 530, 17, 9, '#bc4826'); ln(26, 546, 18, '#555'); ln(53, 546, 18, '#555'); section(561);
  r(26, 570, 106, 50, '#fff'); for (let i = 0; i < 6; i++) { ln(34, 575 + i * 8.3, 9, '#666'); ln(57, 575 + i * 8.3, 20 + i * 9, '#555'); }
  r(0, 633, 156, 93, '#fff'); contact(644); r(0, 726, 156, 90, G); head(736); [27, 63, 99].forEach(x => { r(x, 756, 31, 22, '#dedede'); ln(x + 7, 767, 17, '#b4a86a', 3); para(x, 782, 31, 2); r(x, 788, 12, 3, Y); }); r(27, 756, 10, 4, '#bd9500'); r(63, 796, 30, 7, '#111'); square(803); foot(816, 51);
};
const D2 = () => { grayNav(); head(20); para(24, 38, 90, 2); form(45, 150, Y, G); r(10, 25, 134, 182, '#4d9cf53c'); for (let i = 0; i < 9; i++) r(37, 62 + i * 11, 78, 6, '#fff9'); square(195); foot(207, 48); };
const D3 = () => { grayNav(); head(20); ln(24, 38, 72, '#777'); form(50, 153, Y, G); ln(38, 165, 76, '#999', 6); r(64, 193, 29, 7, '#111'); r(64, 187, 29, 5, Y); square(204); foot(216, 51); };
const D4 = () => { grayNav(); head(20); para(24, 42, 106, 4); r(64, 60, 29, 5, Y); foot(80, 49); };
const D5 = () => { grayNav(); r(0, 12, 156, 216, G); head(20); for (let j = 0; j < 4; j++) for (let i = 0; i < 3; i++) { const x = 26 + i * 36, q = 38 + j * 43; r(x, q, 32, 36, '#fff'); r(x, q, 32, 22, '#dcdcdc'); ln(x + 7, q + 12, 17, '#b7ab77', 3); para(x, q + 27, 31, 2); r(x, q + 33, 13, 3, Y); } ln(56, 213, 38, '#777'); square(216); foot(228, 51); };
const D6 = () => { grayNav(); r(0, 12, 156, 195, G); r(24, 20, 76, 168, '#fff'); ln(30, 30, 60, '#777'); r(32, 36, 12, 3, Y); r(30, 48, 66, 38, '#dedede'); r(30, 88, 66, 23, '#fbe9a0'); para(36, 94, 54, 4); para(32, 114, 62, 4); r(30, 133, 66, 5, Y); para(32, 142, 62, 4); for (let i = 0; i < 4; i++) ln(34, 164 + i * 5, 55, '#777'); r(103, 22, 30, 46, '#fff'); para(104, 28, 24, 10); r(103, 75, 30, 26, '#fff'); para(104, 80, 24, 5); square(196); foot(207, 51); };
const icons6 = (y, n = 5) => { r(24, y, 106, n > 3 ? 64 : 14, '#fff'); for (let i = 0; i < n; i++) { const x = n > 3 ? 40 + i % 2 * 50 : 30 + i * 35, q = y + 10 + (n > 3 ? (i >> 1) * 19 : -3); c(x, q, n > 3 ? 4 : 2, '#e3dab7'); ln(x + 7, q, 20, '#777'); } };
const reasons = (y, n) => { for (let i = 0; i < n; i++) { section(y + i * 28); para(26, y + 8 + i * 28, 104, 3); } };
const D7 = () => {
  whiteNav(); hero(Y); r(0, 66, 103, 12, G); r(0, 90, 156, 84, G); head(80); icons6(100); head(184); reasons(202, 3); r(0, 294, 156, 352, G); head(303); section(323); para(24, 332, 106, 3);
  prices(348, 3, Y); table(387, 4, Y, 9); section(440); para(24, 448, 106, 3); prices(466, 2); prices(496, 2); prices(526, 2); r(26, 553, 104, 82, '#fff'); table(553, 7, Y, 10);
  head(657); for (let i = 0; i < 4; i++) { r(1 + i * 42, 682, 26, 4, '#ead9a1'); para(i * 42, 692, 35, 4); r(-1 + i * 42, 695, 4, 4, '#111'); } r(0, 734, 156, 172, G); head(744); r(24, 764, 108, 132, '#fff'); for (let i = 0; i < 12; i++) { r(25, 766 + i * 11, 22, 9, Y); ln(29, 770 + i * 11, 14, '#8a7010'); ln(51, 768 + i * 11, 50, '#666', 3); ln(51, 772 + i * 11, 34, '#999'); }
  head(919); faq(936, 3, CR, '#ecd78a'); r(0, 1013, 156, 92, G); contact(1025, '#fff'); square(1095); foot(1106, 55, Y, '#757575');
};
const D8 = () => { whiteNav(); r(0, 12, 156, 207, G); r(24, 20, 26, 7, Y); r(26, 38, 102, 20, '#fff'); for (let i = 0; i < 5; i++) ln(32 + i % 3 * 33, 43 + (i > 2 ? 10 : 0), 22, '#888'); for (let i = 0; i < 5; i++) { section(69 + i * 30); para(24, 78 + i * 30, 104, 4); } contact(227); square(298); foot(311, 55, Y, '#757575'); };
const D9 = () => {
  whiteNav(); hero(TL); r(0, 66, 103, 147, G); r(0, 90, 156, 123, G); head(80); icons6(94, 3); reasons(118, 3); head(218); reasons(238, 4); r(0, 339, 156, 710, G); head(351); section(370); para(24, 379, 104, 2);
  section(391); prices(399, 3, TL); prices(438, 1, TL); section(484); prices(498, 2, TL); section(544); prices(550, 3, TL); prices(590, 1, TL); section(634); prices(640, 1, TL); section(688); para(24, 697, 100, 2); prices(712, 3, TL); prices(757, 1, TL); r(24, 800, 106, 54, '#dff0ed'); table(801, 4, '#2aa69c', 9); section(862); para(24, 871, 104, 3); prices(888, 3, TL); prices(932, 1, TL); r(24, 978, 106, 54, '#dff0ed'); table(979, 4, '#2aa69c', 9);
  head(1057); ln(24, 1076, 24, '#777'); [-30, 54, 141].forEach(x => { r(x, 1114, 45, 23, '#cbcbcb'); r(x + 8, 1140, 30, 6, Y); ln(x - 10, 1096, 60, '#aaa'); ln(x - 10, 1105, 60, '#777', 2); r(x - 22, 1114, 5, 5, '#111'); }); r(0, 1164, 156, 106, G); head(1173); faq(1192, 3, '#fff', '#2aa69c'); contact(1280); square(1348); foot(1360, 53, '#1ea399', '#757575');
};
const D10 = () => { whiteNav(); hero(B); r(0, 66, 103, 147, G); r(0, 90, 156, 123, G); head(80); icons6(94, 3); reasons(118, 3); head(218); reasons(238, 3); r(0, 327, 156, 191, G); head(336); section(357); para(24, 366, 106, 3); prices(381, 3, '#3758df'); prices(421, 1, '#3758df'); r(24, 457, 106, 52, '#dfe4fb'); table(459, 4, '#0b31d8', 9); head(531); for (let i = 0; i < 4; i++) { ln(i * 41, 577, 36, '#7d93ef', 3); para(i * 41, 583, 36, 4); r(i * 41 - 5, 579, 4, 4, '#111'); } r(0, 625, 156, 112, G); head(638); faq(655, 3, '#fff', '#0b31d8'); contact(746); square(813); foot(823, 47, '#0229dd', '#757575'); };
const green = (y, w = 68) => { r(78 - w / 2, y, w, 10, '#d2f5dd'); r(74, y + 1, 8, 3, '#2ea352'); ln(56, y + 9, 42, '#6d8a77', 3); ln(50, y + 16, 54, '#a3b8aa'); };
const D11 = () => { r(0, 0, 156, 54, '#eef4f0'); grayNav(); r(62, 17, 32, 9, '#fff'); ln(60, 27, 42, '#4b6', 3); r(84, 30, 26, 6, '#444'); r(50, 42, 14, 11, '#aab'); r(72, 42, 14, 11, '#99a'); r(95, 42, 14, 11, '#aab'); green(58); [26, 62, 98].forEach(x => { r(x, 77, 28, 21, '#dff5e6'); r(x + 2, 79, 24, 17, '#fff'); ln(x + 5, 83, 18, '#8a8'); r(x + 10, 87, 8, 7, '#cdd'); }); r(0, 111, 156, 128, MINT); green(116, 90); ln(58, 150, 36, '#7a9'); [160, 168, 175].forEach(q => ln(50, q, 50, '#777')); r(38, 192, 84, 42, '#cdeed7'); r(42, 194, 76, 38, '#fff'); r(48, 206, 58, 5, '#ebce55'); ln(54, 222, 52, '#777'); green(252); [30, 66, 102].forEach(x => { r(x, 270, 26, 32, '#d9f3e1'); r(x + 2, 272, 22, 28, '#fff'); ln(x + 4, 280, 18, '#666'); r(x + 9, 289, 8, 7, '#ccc'); }); r(0, 314, 156, 196, MINT); green(319, 80); form(353, 146, '#25a244', '#fff'); square(499); foot(510, 51); };
const D12 = () => { r(0, 0, 156, 210, MINT); grayNav(); green(17, 82); form(48, 147, '#25a244', '#fff'); r(64, 185, 29, 7, '#111'); square(196); foot(207, 51); };
const D13 = () => { r(0, 0, 156, 80, MINT); grayNav(); green(17, 82); para(48, 42, 60, 2); r(64, 58, 29, 6, '#25a244'); foot(78, 48); };
const L = (main, gray, bg) => () => {
  r(0, 0, 156, 88, gray ? G : '#fff'); r(0, 0, 39, 87, gray ? Y : G); r(10, 6, 18, 3, '#ccc7a0'); [28, 37, 47, 56].forEach(q => r(10, q, 10, 3, '#333')); r(6, 67, 3, 7, '#222');
  if (!gray) r(39, 0, 117, 66, main); if (bg) { r(0, 0, 156, 9, '#757575'); bits(75, 2, 4, 16, 9, '#fff'); }
  ln(54, 18, 30, '#fff', 6); ln(52, 26, 42, '#444', 3); ln(52, 31, 38, '#444', 3); r(52, 39, 42, 5, main === Y ? '#fff' : '#1c2cd8'); r(50, 48, 42, 6, '#111');
  [[107, 24], [139, 29], [120, 44], [124, 16], [135, 50], [101, 40]].forEach((p, i) => { c(p[0], p[1], i < 3 ? 7.5 : 4, i < 3 ? '#fff' : '#d4cfb6'); });
  if (gray) { r(28, 15, 104, 30, '#fff'); for (let i = 0; i < 4; i++) { c(46 + i * 21, 27, 4, '#e3dab7'); ln(40 + i * 21, 36, 13, '#555'); } c(142, 47, 5, Y); }
  ln(117, 61, 26, gray ? Y : '#111', 5); r(148, 60, 6, 6, '#111'); r(45, 67, 50, 20, '#fff'); r(104, 67, 50, 20, '#f0dc95'); [116, 128, 141].forEach(x => c(x, 74, 4.5, '#fff')); r(113, 81, 30, 3, '#d6a80c');
};
const S = (tab) => () => { r(0, 0, 156, 123, Y); ln(26, 16, 35, '#fff', 8); r(61, 18, 9, 3, '#7b6a20'); r(25, 31, 106, 9, '#fee48a'); r(25 + tab * 35, 31, 35, 9, '#fff'); ln(30, 35, 96, '#d9b030'); r(26, 46, 106, 64, '#fff'); for (let i = 0; i < [5, 3, 3][tab]; i++) { c(41 + i % 2 * 49, 58 + (i >> 1) * 20, 4, '#e3dab7'); ln(48 + i % 2 * 49, 58 + (i >> 1) * 20, 22, '#777'); } };
const FQ = () => { r(26, 12, 20, 8, Y); ln(46, 18, 16, '#777'); r(26, 24, 104, 1.5, '#e3e3e3'); for (let i = 0; i < 4; i++) { r(26, 31 + i * 30, 104, 26, CR); r(28, 34 + i * 30, 7, 3, Y); ln(35, 35 + i * 30, 38, '#777'); ln(34, 44 + i * 30, 86, '#666', 3); ln(34, 49 + i * 30, 70, '#888'); r(123, 33 + i * 30, 5, 5, '#ccc6ac'); } };
const FM = () => { r(0, 0, 156, 174, G); ln(28, 14, 30, '#777'); ln(26, 21, 54, '#888'); form(28, 134, Y, '#fff'); };

// Narrow boards, 45 units wide.
const mNav = (g) => { r(0, 0, 45, 8, g ? '#757575' : '#fff'); ln(3, 4, 14, '#aaa'); };
const mHead = (y) => { r(2, y, 12, 3, Y); r(4, y + 2, 21, 4, Y); ln(26, y + 4, 8, '#999'); };
const mFoot = (y, h, col = '#757575', bar = '#000') => { r(0, y, 45, h, col); r(0, y + h - 8, 45, 8, bar); r(30, y + h - 6, 11, 4, '#fff'); r(33, y - 3, 8, 6, '#111'); ln(4, y + 9, 14, '#aaa', 3); const n = Math.floor((h - 36) / 8); for (let i = 0; i < n; i++) { ln(4, y + 16 + i * 8, 8 + i * 5 % 17, col === Y ? '#574a10' : '#fff', 2.6); r(4, y + 21 + i * 8, 36, .7, '#0002'); if (i % 3 === 0) r(39, y + 15 + i * 8, 2, 2, '#fff'); } r(3, y + h - 22, 38, 6, col === Y ? '#1e35c9' : Y); ln(16, y + h - 19, 13, col === Y ? '#fff' : '#554400'); };
const mHero = (col) => { r(0, 8, 45, 66, col); ln(6, 15, 32, '#fff', 5); ln(4, 22, 36, '#fff', 4); [[14, 38], [31, 42], [20, 52]].forEach(p => { c(p[0], p[1], 5.5, '#fff'); c(p[0], p[1], 3, '#c3c3b9'); }); c(30, 55, 3, '#8d83a6'); r(6, 63, 18, 6, Y); r(25, 63, 16, 6, '#222'); };
const mContact = (y) => { r(2, y, 41, 70, CR); r(9, y + 1, 27, 6, Y); for (let i = 0; i < 3; i++) { c(12 + i * 10, y + 14, 4, '#f5dd8d'); r(8 + i * 10, y + 20, 8, 3, '#e3bd6c'); } para(6, y + 28, 34, 3); r(3, y + 38, 39, 7, Y); ln(9, y + 41, 25, '#a58a20'); ln(12, y + 52, 24, '#222', 4); ln(10, y + 57, 27, '#999'); };
const mForm = (y, h, btn) => { r(3, y, 40, h, '#fff'); let i = 0; for (let q = y + 4; q < y + h - 18; q += 9, i++) { ln(4, q, 7 + i * 4 % 10, i % 2 ? '#999' : '#777'); if (i % 2) r(14, q - 1, 6, 2, '#f0b0b0'); r(5, q + 3, 32, .8, '#ddd'); } ln(6, y + h - 12, 30, '#ed9a9a'); r(3, y + h - 8, 39, 6, btn); };
const mText = (y, n) => para(2, y, 41, n);
const mIcons = (y) => { r(2, y, 41, 62, '#fff'); for (let i = 0; i < 4; i++) { c(10, y + 9 + i * 14, 3, '#ddd2a8'); ln(17, y + 9 + i * 14, 17, '#888'); } };
const M = [
  () => { mNav(); mHero(B); r(2, 78, 41, 22, '#f7ecc5'); [10, 22, 34].forEach(x => c(x, 86, 4, '#fff')); r(3, 100, 40, 16, '#52298f'); r(6, 94, 34, 5, Y); ln(8, 108, 30, '#c67b70', 4); mHead(130); r(2, 141, 18, 6, Y); r(2, 152, 42, 70, Y); for (let i = 0; i < 5; i++) { r(5, 155 + i * 13, 37, 11, '#fff'); ln(12, 160 + i * 13, 19, '#999'); } r(0, 234, 45, 365, G); mHead(238); r(1, 250, 43, 12, '#654337'); mText(268, 4); mText(288, 5); mText(313, 4); for (let j = 0; j < 6; j++) { r(2, 345 + j * 24, 20, 22, '#fff'); r(24, 345 + j * 24, 20, 22, '#fff'); r(1, 345 + j * 24, 42, 4, '#ecbf18'); r(5, 354 + j * 24, 13, 7, j % 3 === 2 ? '#bbb' : Y); r(26, 353 + j * 24, 14, 8, j % 3 === 1 ? '#bbb' : Y); } ln(4, 494, 22, '#444', 3); c(10, 505, 5, '#4c3934'); r(4, 510, 13, 10, '#666'); c(33, 505, 6, '#6a2a18'); r(25, 510, 17, 10, '#bc4826'); ln(4, 527, 36, '#555'); ln(4, 535, 22, '#444'); r(3, 540, 40, 52, '#fff'); for (let i = 0; i < 6; i++) ln(4, 543 + i * 9, 28 - i % 3 * 6, '#555', 3); mContact(607); r(0, 686, 45, 76, G); mHead(690); r(3, 702, 40, 48, '#fff'); r(6, 704, 34, 20, '#ddd'); ln(14, 714, 17, '#b7ab77', 3); ln(7, 730, 28, '#888'); r(7, 735, 9, 3, Y); r(3, 744, 39, 7, '#111'); mFoot(762, 132); },
  () => { mNav(1); mHead(12); mText(23, 2); mForm(40, 160, Y); mFoot(212, 133); },
  () => { mNav(1); mHead(12); mText(23, 4); mForm(42, 160, Y); mText(158, 5); r(3, 198, 39, 7, '#111'); mFoot(220, 134); },
  () => { mNav(1); mHead(12); mText(23, 2); mText(36, 4); r(3, 54, 39, 5, Y); mFoot(70, 134); },
  () => { mNav(1); r(0, 8, 45, 248, G); mHead(12); for (let i = 0; i < 5; i++) { r(5, 30 + i * 42, 35, 38, '#fff'); r(5, 30 + i * 42, 35, 20, '#ddd'); r(6, 31 + i * 42, 9, 3, '#bd9500'); ln(14, 41 + i * 42, 16, '#b7ab77', 3); ln(7, 56 + i * 42, 30, '#888'); r(6, 60 + i * 42, 9, 3, Y); } mFoot(256, 134); },
  () => { mNav(1); r(0, 8, 45, 212, G); ln(3, 15, 30, '#777'); mText(26, 2); r(3, 34, 12, 3, Y); r(3, 44, 40, 25, '#ddd'); r(3, 74, 40, 28, '#fae294'); para(7, 80, 32, 6); mText(108, 5); r(3, 133, 40, 9, Y); mText(146, 4); mText(172, 6); mFoot(221, 133); },
  () => { mNav(); mHero(Y); r(0, 74, 45, 84, G); mHead(84); mIcons(98); mContact(180); mHead(266); mText(278, 4); r(4, 312, 14, 14, '#fbe28c'); r(20, 312, 20, 14, '#dfa7b7'); mText(340, 12); mText(398, 11); mContact(460); r(0, 538, 45, 320, G); mHead(545); r(2, 556, 41, 66, '#fff'); mText(580, 6); r(16, 614, 12, 4, '#222'); mHead(638); r(2, 650, 41, 74, CR); mText(654, 9); r(3, 704, 39, 4, '#f6dd87'); r(3, 717, 39, 3, '#f6dd87'); mHead(742); mText(754, 4); mForm(768, 160, Y); mFoot(942, 117, Y, '#757575'); },
  () => { mNav(); r(0, 8, 45, 200, G); mHead(12); r(3, 24, 40, 22, '#fff'); bits(5, 32, 3, 13, 9, '#999'); mText(52, 5); mText(76, 4); r(2, 138, 41, 40, '#fff'); r(12, 145, 20, 5, Y); ln(14, 155, 18, '#111', 6); r(5, 171, 34, 5, '#2038c7'); r(17, 182, 10, 4, Y); mText(202, 2); mText(220, 3); mText(242, 3); mForm(268, 158, Y); mFoot(442, 116, Y, '#757575'); },
  () => { mNav(); mHero(TL); r(0, 74, 45, 84, G); mHead(84); mIcons(94); mContact(156); mHead(240); mText(252, 7); mText(286, 6); mText(316, 8); mContact(365); mHead(446); mText(458, 5); [495, 548, 594, 642].forEach(q => { r(0, q - 10, 45, 47, G); r(3, q, 40, 35, '#fff'); ln(15, q + 8, 16, '#777', 2); ln(14, q + 15, 17, '#111', 6); ln(12, q + 24, 20, '#999'); r(6, q + 30, 34, 5, TL); }); mContact(703); r(0, 780, 45, 230, G); mHead(786); r(2, 798, 41, 76, '#fff'); mText(804, 5); r(4, 832, 37, 18, '#c8c8c8'); r(10, 855, 24, 4, Y); r(15, 869, 14, 4, '#222'); mHead(893); r(2, 904, 41, 78, CR); mText(910, 10); mHead(996); mText(1010, 3); mForm(1022, 160, Y); mFoot(1197, 111, '#1ea399', '#757575'); },
  () => { mNav(); mHero(B); r(0, 74, 45, 84, G); mHead(84); mIcons(94); mContact(156); mHead(240); mText(251, 4); r(6, 268, 14, 16, '#222'); c(33, 278, 9, '#d9687c'); c(33, 278, 4, '#6dc1e0'); r(6, 288, 14, 36, '#2f57e4'); r(27, 294, 12, 17, '#ef6b6b'); r(26, 313, 14, 13, Y); mText(340, 8); mContact(387); r(0, 464, 45, 124, G); mHead(474); r(2, 484, 41, 100, '#fff'); ln(4, 504, 38, '#7d93ef', 3); mText(512, 11); r(16, 568, 12, 4, '#222'); mHead(592); r(2, 604, 41, 74, CR); mText(610, 10); mHead(698); mText(710, 3); mForm(722, 160, Y); mFoot(899, 103, '#0229dd', '#757575'); },
  () => { r(0, 0, 45, 611, MINT); mNav(1); r(0, 8, 45, 34, '#cfdad2'); ln(8, 27, 30, '#555', 4); for (let i = 0; i < 7; i++) { r(3, 52 + i * 24, 39, 20, '#fff'); ln(11, 56 + i * 24, 24, '#8ac79c'); ln(5, 64 + i * 24, 30, '#99a'); r(32, 60 + i * 24, 9, 8, '#bbc'); } r(3, 224, 40, 48, '#fdf4ce'); para(10, 234, 24, 6); for (let i = 0; i < 5; i++) { r(3, 284 + i * 24, 40, 19, '#fff'); ln(15, 290 + i * 24, 24, '#777'); } ln(14, 400, 18, '#25a244', 3); mText(408, 4); mForm(430, 168, '#25a244'); mFoot(611, 133); },
  () => { r(0, 0, 45, 214, MINT); mNav(1); r(3, 12, 38, 8, '#d2f5dd'); ln(12, 21, 22, '#3a6', 3); mText(30, 3); mForm(48, 150, '#25a244'); r(3, 196, 39, 5, '#111'); mFoot(214, 134); },
  () => { r(0, 0, 45, 78, MINT); mNav(1); r(3, 12, 38, 8, '#d2f5dd'); ln(12, 21, 22, '#3a6', 3); mText(32, 5); r(3, 63, 39, 6, '#25a244'); mFoot(78, 132); },
];

const canvas = document.getElementById('canvas');
const OX = 365, OY = 93;
const add = (html) => canvas.insertAdjacentHTML('beforeend', html);
const board = (x, top, w, bottom, draw) => {
  out = []; draw();
  add(`<svg class="board" style="left:${x - OX}px;top:${top - OY}px" width="${w}" height="${bottom - top}" viewBox="0 0 ${w * 3} ${(bottom - top) * 3}">${out.join('')}</svg>`);
};
const dots = (x, y, sel) => add(`<div class="dots${sel ? ' sel' : ''}" style="left:${x - OX}px;top:${y - OY}px"></div>`);

const desk = [[481, 597, D1], [536, 393, D2], [591, 397, D3], [646, 351, D4], [701, 401, D5], [755, 394, D6], [810, 695, D7], [865, 430, D8], [920, 779, D9], [975, 598, D10], [1030, 495, D11], [1084, 394, D12], [1139, 350, D13]];
desk.forEach(([x, b, f], i) => { board(x, 308, i === 4 || i === 10 ? 51 : 52, b, f); dots(x, 300, i === 1); });
[606, 423, 426, 376, 438, 426, 661, 494, 744, 642, 556, 424, 378].forEach((b, i) => { board(1220 + i * 18, 308, 15, b, M[i]); dots(1220 + i * 18, 300); });
board(481, 606, 52, 635, L('#fee590')); board(536, 606, 52, 635, L(Y));
board(481, 641, 52, 670, L(Y, 1)); board(536, 641, 52, 670, L(Y, 1, 1));
[481, 536, 591].forEach((x, i) => board(x, 675, 52, 716, S(i)));
board(755, 611, 52, 663, FQ); board(755, 669, 52, 727, FM);
[[482, 598], [537, 598], [482, 632], [537, 632], [482, 667], [537, 667], [592, 667], [756, 602], [756, 661]].forEach(p => dots(p[0], p[1]));
add(`<svg class="over" style="left:${480 - OX}px;top:${292 - OY}px" width="120" height="50"><path d="M1.500 6V1.500H3" fill="none" stroke="#777"/><rect x="38" y="40" width="18" height="9.500" rx="2" fill="#2680eb"/><path d="M56 44.500H103" stroke="#2680eb" stroke-dasharray="4 3"/><g fill="#fff" stroke="#2680eb" stroke-width="1.200"><path d="M65 29.500H100"/><circle cx="65" cy="29.700" r="5.200"/><circle cx="82.500" cy="29.300" r="5.200"/><circle cx="100" cy="29.700" r="5.200"/></g></svg>`);
```
